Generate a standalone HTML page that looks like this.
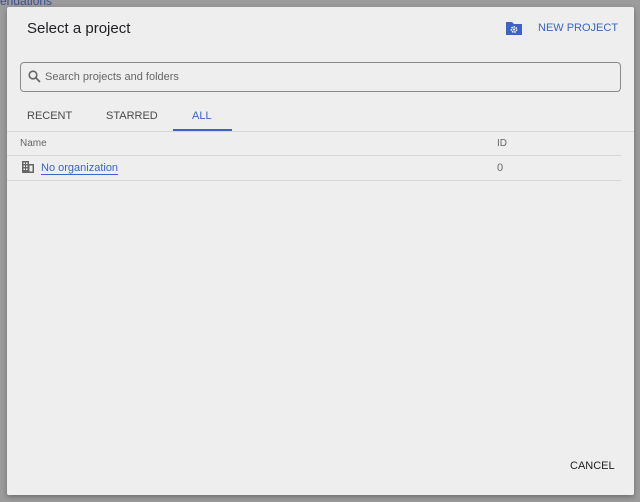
<!DOCTYPE html>
<html><head><meta charset="utf-8"><style>
*{margin:0;padding:0;box-sizing:border-box}
body{width:640px;height:502px;background:#9c9c9c;font-family:"Liberation Sans",sans-serif;position:relative;overflow:hidden}
.bgt{position:absolute;font-size:12px;color:#3b4f9a}
.dlg{position:absolute;left:7px;top:7px;width:627px;height:488px;background:#eeeeee;border-radius:2px;box-shadow:0 2px 6px rgba(0,0,0,.3)}
.t{position:absolute;left:20px;top:13px;font-size:15px;color:#202124}
.np{position:absolute;left:531px;top:15px;font-size:11px;font-weight:500;color:#3c64c4}
.fold{position:absolute;left:498px;top:13px}
.search{position:absolute;left:13px;top:55px;width:601px;height:30px;border:1px solid #8a8a8a;border-radius:4px}
.search span{position:absolute;left:24px;top:8px;font-size:11px;color:#666}
.search svg{position:absolute;left:7px;top:7px}
.tab{position:absolute;top:103px;font-size:11px;color:#4a4a4a;font-weight:500}
.ul{position:absolute;left:166px;top:122px;width:59px;height:2px;background:#3c64c4}
.line{position:absolute;height:1px;background:#d6d6d6}
.h{position:absolute;top:131px;font-size:10px;color:#666}
.link{position:absolute;left:34px;top:155px;font-size:11px;color:#3c64c4;border-bottom:1px solid #3c64c4;line-height:12px}
.cancel{position:absolute;left:563px;top:453px;font-size:11px;font-weight:500;color:#222}
</style></head><body>
<div class="bgt" style="left:0;top:-6px">endations</div>
<div class="dlg">
<div class="t">Select a project</div>
<svg class="fold" width="18" height="16" viewBox="0 0 18 16"><path d="M1 2h6l2 2h8v11H1z" fill="#3c64c4"/><circle cx="9" cy="9.5" r="2.6" fill="none" stroke="#fff" stroke-width="1.6" stroke-dasharray="1.4 0.9"/><circle cx="9" cy="9.5" r="1" fill="#fff"/></svg>
<div class="np">NEW PROJECT</div>
<div class="search"><svg width="13" height="13" viewBox="0 0 13 13"><circle cx="5" cy="5" r="3.8" fill="none" stroke="#666" stroke-width="1.6"/><path d="M8 8l4 4" stroke="#666" stroke-width="1.8"/></svg><span>Search projects and folders</span></div>
<div class="tab" style="left:20px">RECENT</div>
<div class="tab" style="left:99px">STARRED</div>
<div class="tab" style="left:185px;color:#3c64c4">ALL</div>
<div class="ul"></div>
<div class="line" style="left:0;top:124px;width:627px"></div>
<div class="h" style="left:13px">Name</div>
<div class="h" style="left:490px">ID</div>
<div class="line" style="left:0;top:148px;width:614px"></div>
<svg style="position:absolute;left:15px;top:154px" width="12" height="12" viewBox="0 0 12 12"><path d="M0 0h7v3h5v9H0z" fill="#666"/><g fill="#eee"><rect x="1.5" y="1.5" width="1.5" height="1.5"/><rect x="4" y="1.5" width="1.5" height="1.5"/><rect x="1.5" y="4.5" width="1.5" height="1.5"/><rect x="4" y="4.5" width="1.5" height="1.5"/><rect x="1.5" y="7.5" width="1.5" height="1.5"/><rect x="4" y="7.5" width="1.5" height="1.5"/><rect x="7.5" y="4.5" width="3" height="6"/></g></svg>
<div class="link">No organization</div>
<div class="h" style="left:490px;top:155px;font-size:11px">0</div>
<div class="line" style="left:0;top:173px;width:614px"></div>
<div class="cancel">CANCEL</div>
</div>
</body></html>
